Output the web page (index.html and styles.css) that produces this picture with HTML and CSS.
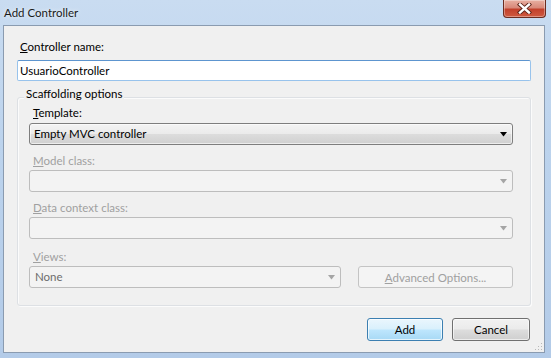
FILE: index.html
```html
<!DOCTYPE html>
<html>
<head>
<meta charset="utf-8">
<title>Add Controller</title>
<link rel="stylesheet" href="styles.css">
</head>
<body>
<div class="window">
  <div class="titlebar">
    <span class="title">Add Controller</span>
    <div class="close">
      <svg width="17" height="11" viewBox="0 0 17 11">
        <path d="M4 1.5 L13 9.5 M13 1.5 L4 9.5" stroke="#5a2318" stroke-width="4.2" stroke-linecap="square"/>
        <path d="M4 1.5 L13 9.5 M13 1.5 L4 9.5" stroke="#ffffff" stroke-width="2.4" stroke-linecap="square"/>
      </svg>
    </div>
  </div>
  <div class="client">
    <div class="lbl name-lbl"><u>C</u>ontroller name:</div>
    <div class="textbox">UsuarioController</div>

    <div class="group">
      <div class="legend">Scaffolding options</div>

      <div class="field first">
        <div class="lbl"><u>T</u>emplate:</div>
        <div class="combo active">
          <span>Empty MVC controller</span>
          <svg class="arrow" width="7" height="5" viewBox="0 0 7 5"><path d="M0 0 H7 L3.5 4.5 Z" fill="#000"/></svg>
        </div>
      </div>

      <div class="field">
        <div class="lbl disabled"><u>M</u>odel class:</div>
        <div class="combo off">
          <span></span>
          <svg class="arrow" width="7" height="5" viewBox="0 0 7 5"><path d="M0 0 H7 L3.5 4.5 Z" fill="#a5a5a5"/></svg>
        </div>
      </div>

      <div class="field">
        <div class="lbl disabled"><u>D</u>ata context class:</div>
        <div class="combo off">
          <span></span>
          <svg class="arrow" width="7" height="5" viewBox="0 0 7 5"><path d="M0 0 H7 L3.5 4.5 Z" fill="#a5a5a5"/></svg>
        </div>
      </div>

      <div class="field views">
        <div class="lbl disabled"><u>V</u>iews:</div>
        <div class="views-row">
          <div class="combo off small">
            <span class="none">None</span>
            <svg class="arrow" width="7" height="5" viewBox="0 0 7 5"><path d="M0 0 H7 L3.5 4.5 Z" fill="#a5a5a5"/></svg>
          </div>
          <div class="btn adv"><u>A</u>dvanced Options...</div>
        </div>
      </div>
    </div>

    <div class="buttons">
      <div class="btn default add">Add</div>
      <div class="btn cancel">Cancel</div>
    </div>

    <svg class="grip" width="8" height="8" viewBox="0 0 8 8">
      <g fill="#b8b8b8">
        <rect x="6" y="0" width="1" height="1"/>
        <rect x="3" y="3" width="1" height="1"/><rect x="6" y="3" width="1" height="1"/>
        <rect x="0" y="6" width="1" height="1"/><rect x="3" y="6" width="1" height="1"/><rect x="6" y="6" width="1" height="1"/>
      </g>
    </svg>
  </div>
</div>
</body>
</html>
```

FILE: styles.css
```css
* { box-sizing: border-box; }

html, body {
  margin: 0;
  padding: 0;
}

body {
  width: 551px;
  height: 358px;
  overflow: hidden;
  font-family: Lato, "Noto Sans", sans-serif;
  font-size: 11.5px;
  color: #000;
  background: linear-gradient(180deg, #c9dcf1 0%, #bcd3ed 40%, #b3cbe8 100%);
}

.window {
  width: 551px;
  height: 358px;
  padding: 0 6px 5px 3px;
  display: flex;
  flex-direction: column;
}

.titlebar {
  height: 25px;
  display: flex;
  align-items: flex-start;
}

.title {
  margin-top: 5px;
  margin-left: 1px;
  line-height: 15px;
  color: #1a1a1a;
  text-shadow: 0 0 4px rgba(255,255,255,0.9);
}

.close {
  margin-left: auto;
  margin-right: -1px;
  width: 43px;
  height: 18px;
  border: 1px solid #6b2c20;
  border-top: none;
  border-radius: 0 0 4px 4px;
  background: linear-gradient(180deg, #e8b0a2 0%, #d8897a 45%, #c2412c 55%, #cf5a40 100%);
  box-shadow: inset 0 0 0 1px rgba(255,255,255,0.35);
  display: flex;
  align-items: center;
  justify-content: center;
}

.client {
  position: relative;
  height: 328px;
  border: 1px solid #8a9bb0;
  background: #f0f0f0;
  padding: 13px 13px 0 13px;
  display: flex;
  flex-direction: column;
}

.lbl {
  line-height: 13px;
  padding-left: 4px;
  margin-bottom: 3px;
}

.lbl.disabled { color: #a0a0a0; }

.name-lbl {
  line-height: 15px;
  padding-left: 3px;
  margin-bottom: 6px;
}

.textbox {
  height: 21px;
  border: 1px solid #98c3ec;
  border-top-color: #5d95cf;
  border-radius: 2px;
  background: #fff;
  line-height: 19px;
  padding-left: 2px;
}

.group {
  margin-top: 16px;
  border: 1px solid #dde0e4;
  box-shadow: inset 1px 1px 0 #fbfbfb, 1px 1px 0 #fbfbfb;
  border-radius: 3px;
  padding: 0 17px 17px 11px;
  display: flex;
  flex-direction: column;
}

.legend {
  width: max-content;
  margin: -12px 0 0 -5px;
  padding: 0 2px;
  background: #f0f0f0;
  line-height: 15px;
}

.field { margin-top: 9px; display: flex; flex-direction: column; }
.field.first { margin-top: 5px; }
.field.views { margin-top: 11px; }

.field.first .lbl { margin-bottom: 4px; }

.combo {
  height: 22px;
  border-radius: 3px;
  display: flex;
  align-items: center;
  padding: 0 4px 0 4px;
}

.combo span { flex: 1; line-height: 18px; }

.combo.active {
  border: 1px solid #7e7e7e;
  background: linear-gradient(180deg, #f3f3f3 0%, #ebebeb 48%, #dcdcdc 52%, #d0d0d0 100%);
  box-shadow: inset 0 0 0 1px rgba(255,255,255,0.6);
}

.combo.off {
  border: 1px solid #bdbdbd;
  background: #f3f3f3;
}

.arrow { margin-right: 1px; }

.views-row {
  display: flex;
  gap: 17px;
}

.combo.small { width: 312px; }

.none { color: #6d6d6d; padding-left: 1px; }

.btn {
  height: 22px;
  display: flex;
  align-items: center;
  justify-content: center;
  border-radius: 3px;
  line-height: 15px;
}

.adv {
  flex: 1;
  border: 1px solid #c4c4c4;
  background: #f4f4f4;
  color: #a0a0a0;
}

.buttons {
  margin-top: 12px;
  margin-right: 1px;
  display: flex;
  justify-content: flex-end;
  gap: 9px;
}

.buttons .btn { height: 23px; }

.add {
  width: 76px;
  border: 1px solid #3c7fb1;
  background: linear-gradient(180deg, #eaf6fd 0%, #d9f0fc 48%, #bee6fd 52%, #a7d9f5 100%);
  box-shadow: inset 0 0 0 1px rgba(255,255,255,0.7);
}

.cancel {
  width: 78px;
  border: 1px solid #707070;
  background: linear-gradient(180deg, #f2f2f2 0%, #ebebeb 48%, #dddddd 52%, #cfcfcf 100%);
  box-shadow: inset 0 0 0 1px rgba(255,255,255,0.6);
}

.grip {
  position: absolute;
  right: 1px;
  bottom: 1px;
}
```
